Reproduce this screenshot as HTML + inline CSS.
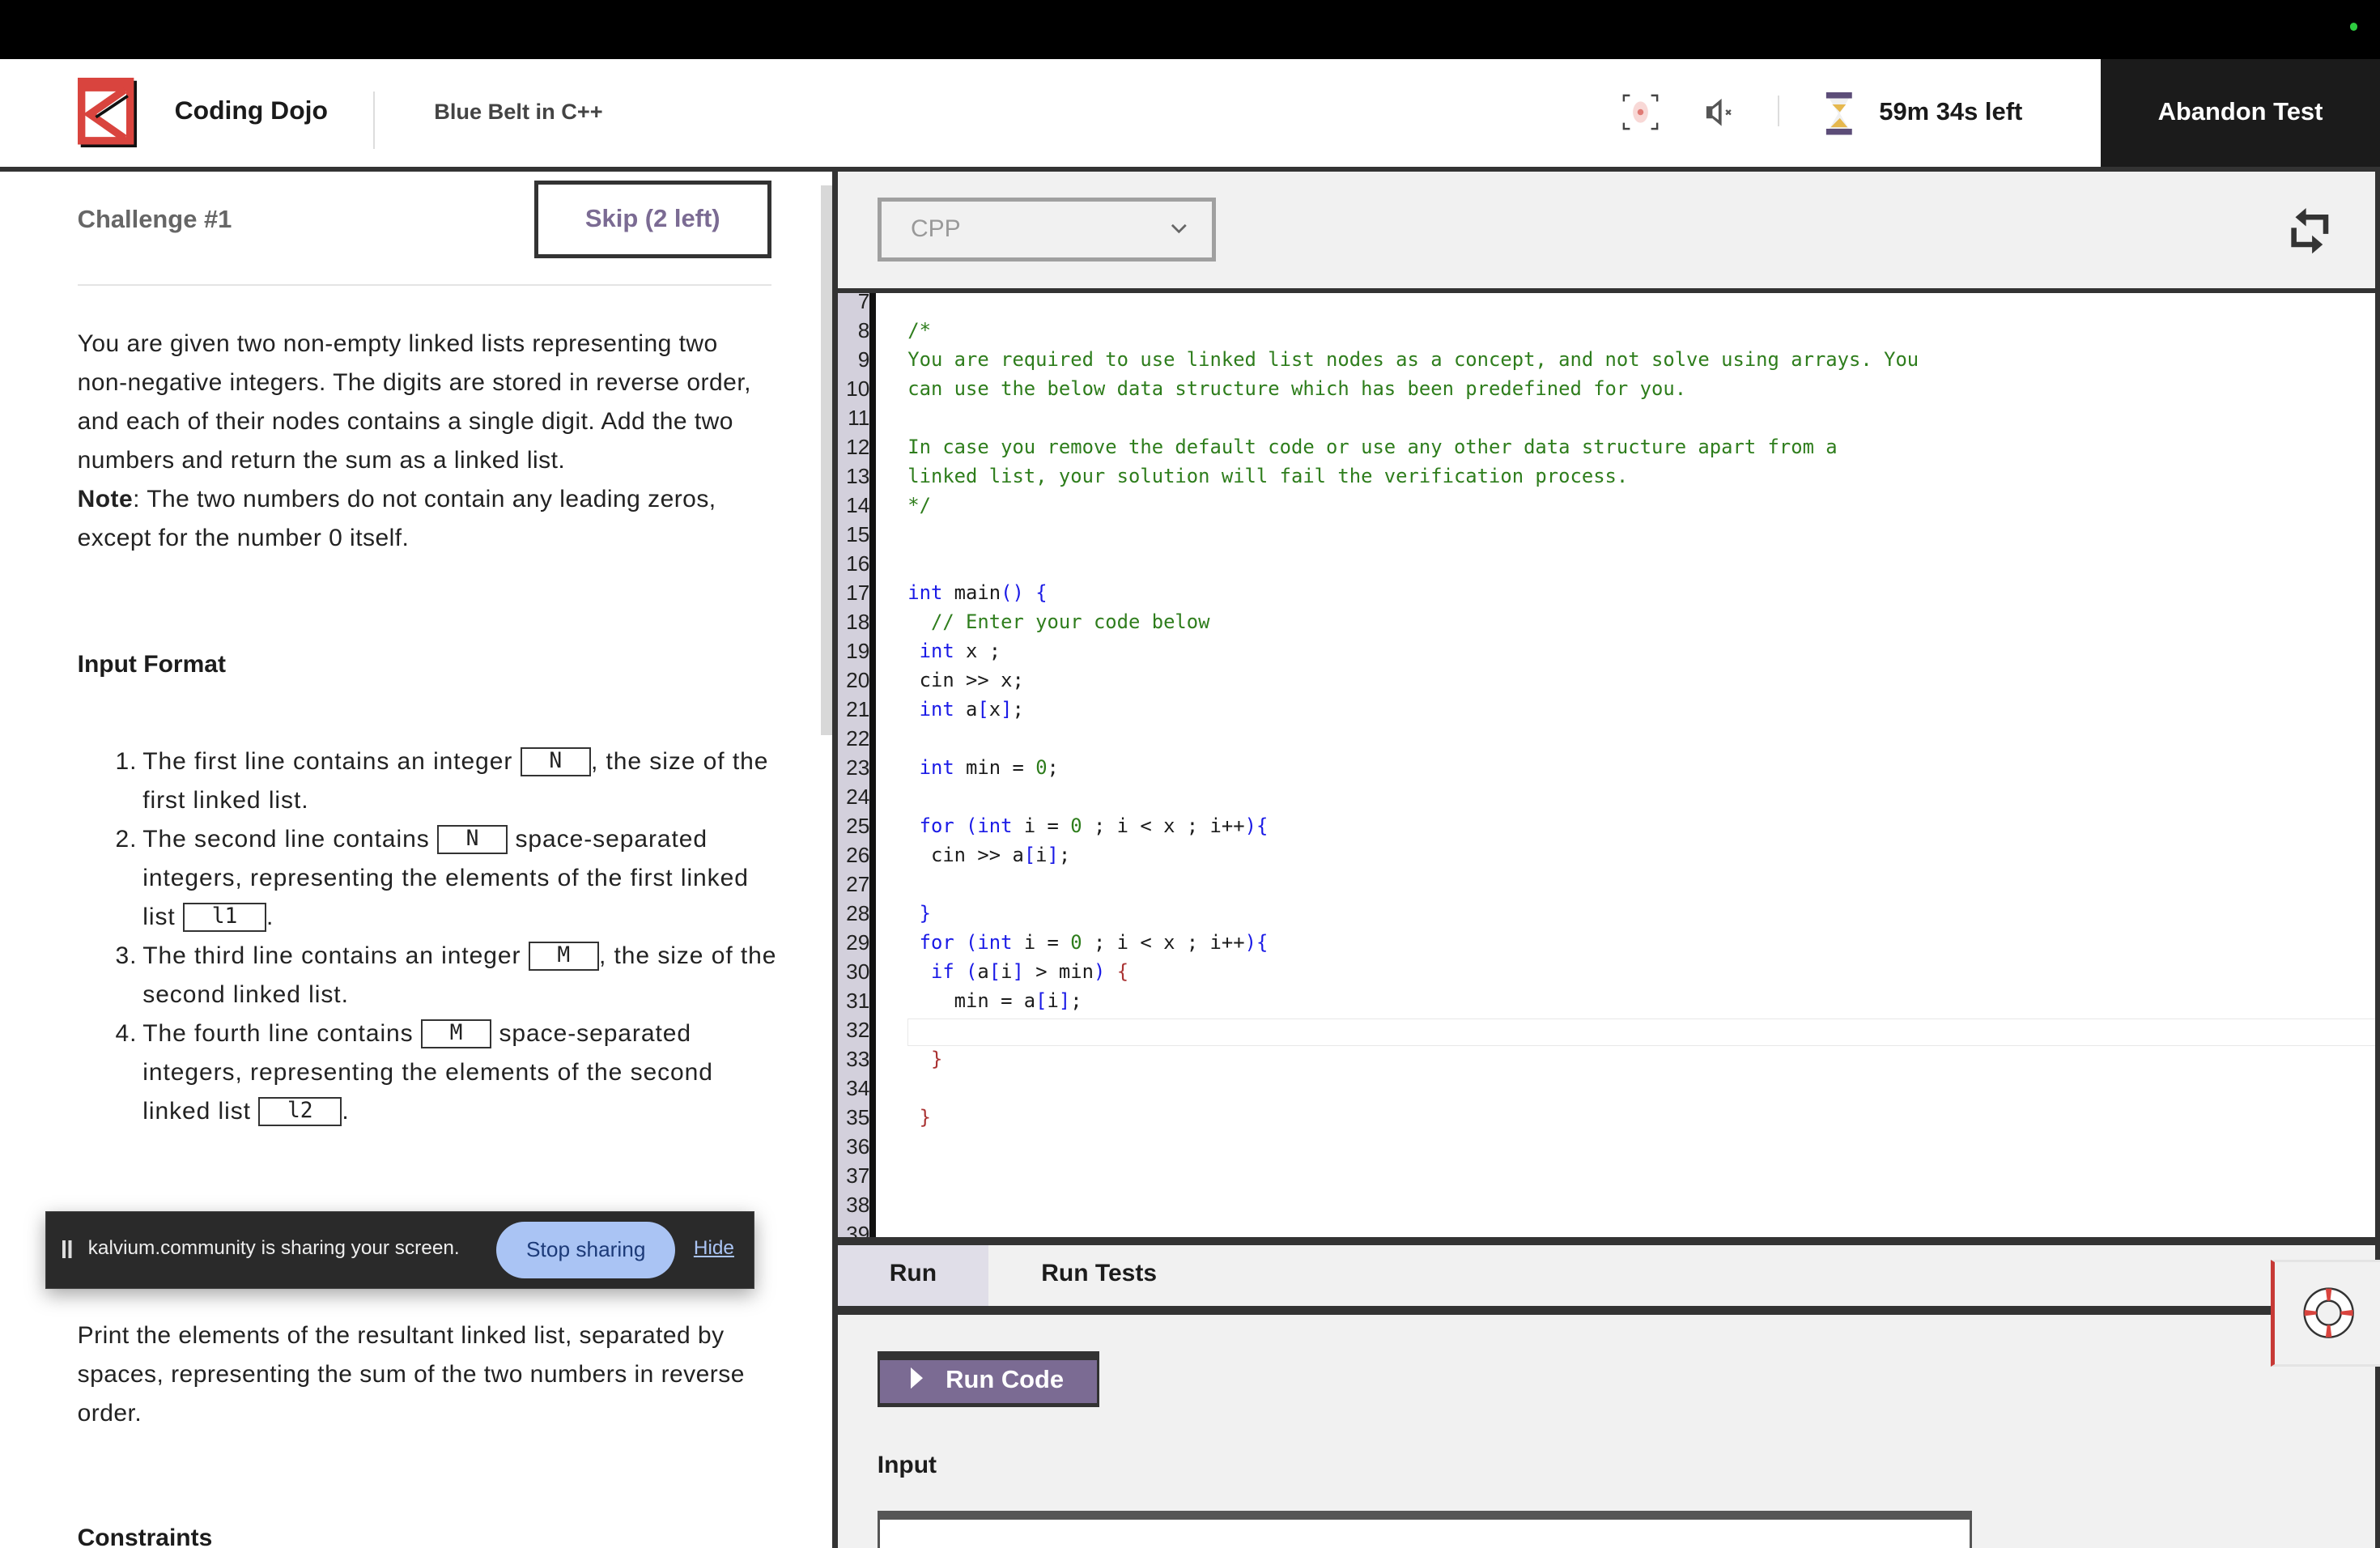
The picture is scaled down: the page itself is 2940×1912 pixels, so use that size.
<!DOCTYPE html>
<html><head><meta charset="utf-8"><style>
*{box-sizing:border-box;margin:0;padding:0}
html,body{width:2940px;height:1912px;overflow:hidden;background:#fff}
#w{zoom:1.875;width:1568px;height:1020px;position:relative;font-family:"Liberation Sans",sans-serif;color:#1c1c1c;overflow:hidden}
.a{position:absolute}
.code{font-family:"DejaVu Sans Mono","Liberation Mono",monospace;font-size:12.72px;white-space:pre;line-height:19.2px}
.g{color:#2e7d1c}.k{color:#1a1ae6}
.ln{position:absolute;left:552px;width:21px;text-align:right;font-family:"Liberation Sans Narrow","Liberation Sans",sans-serif;font-size:14px;color:#222;line-height:19.2px}
.p{font-size:16px;line-height:25.6px;color:#222;letter-spacing:0.25px}
.box{display:inline-block;border:1.5px solid #333;font-family:"DejaVu Sans Mono",monospace;font-size:14px;line-height:17px;padding:0 18px;vertical-align:1px;letter-spacing:0}
</style></head><body><div id="w">
<div class="a" style="left:0;top:0;width:1568px;height:39px;background:#000"></div>
<div class="a" style="left:1548px;top:15px;width:5px;height:5px;border-radius:50%;background:#2ecc40"></div>
<!-- header -->
<div class="a" style="left:0;top:110px;width:1568px;height:3px;background:#333"></div>
<svg class="a" style="left:51px;top:51px" width="39" height="46" viewBox="0 0 39 46"><rect x="2" y="2" width="37" height="44" fill="#111"/><rect x="0" y="0" width="37" height="44" fill="#d9443e"/><rect x="5" y="9" width="27" height="30" fill="#fff"/><path d="M31 8 L8 24 L31 40" stroke="#d9443e" stroke-width="5" fill="none"/><path d="M33 12 L12 26" stroke="#111" stroke-width="2"/></svg>
<div class="a" style="left:115px;top:63px;font-size:17px;font-weight:bold;color:#1a1a1a">Coding Dojo</div>
<div class="a" style="left:246px;top:60px;width:1px;height:38px;background:#ddd"></div>
<div class="a" style="left:286px;top:65px;font-size:14.5px;font-weight:bold;color:#444">Blue Belt in C++</div>
<svg class="a" style="left:1069px;top:62px" width="24" height="24" viewBox="0 0 24 24"><path d="M1 5V1H5M19 1H23V5M23 19V23H19M5 23H1V19" stroke="#444" stroke-width="1.3" fill="none"/><ellipse cx="12" cy="12" rx="5" ry="7" fill="#f8d8d6"/><circle cx="12" cy="12" r="2" fill="#e07a74"/></svg>
<svg class="a" style="left:1123px;top:64px" width="20" height="20" viewBox="0 0 20 20"><path d="M1 6H5L11 1V19L5 14H1Z" fill="#555"/><path d="M5 8L9 5V15L5 12Z" fill="#fff"/><path d="M14 8.5L17 11.5M17 8.5L14 11.5" stroke="#555" stroke-width="1.3"/></svg>
<div class="a" style="left:1171px;top:63px;width:1.5px;height:20px;background:#ddd"></div>
<svg class="a" style="left:1202px;top:61px" width="20" height="28" viewBox="0 0 20 28"><rect x="1" y="0" width="17" height="4" fill="#5c4d78"/><rect x="1" y="24" width="17" height="4" fill="#5c4d78"/><path d="M3 4H16L10 14L16 24H3L9 14Z" fill="#f0f0f0"/><path d="M5 8H14L10 13Z M4 23H15L10 17Z" fill="#e6b84e"/></svg>
<div class="a" style="left:1238px;top:64px;font-size:16.5px;font-weight:bold;color:#1a1a1a">59m 34s left</div>
<div class="a" style="left:1384px;top:39px;width:184px;height:71px;background:#1b1b1b"></div>
<div class="a" style="left:1384px;top:64px;width:184px;text-align:center;font-size:16.5px;font-weight:bold;color:#fff">Abandon Test</div>
<!-- left panel -->
<div class="a" style="left:51px;top:135px;font-size:16.5px;font-weight:bold;color:#666">Challenge #1</div>
<div class="a" style="left:352px;top:119px;width:156px;height:51px;border:3px solid #333;text-align:center;line-height:45px;font-size:16.5px;font-weight:bold;color:#7b6b93">Skip (2 left)</div>
<div class="a" style="left:51px;top:187px;width:457px;height:1.5px;background:#e4e4e4"></div>
<div class="a p" style="left:51px;top:214px;width:456px">You are given two non-empty linked lists representing two non-negative integers. The digits are stored in reverse order, and each of their nodes contains a single digit. Add the two numbers and return the sum as a linked list.<br><b>Note</b>: The two numbers do not contain any leading zeros, except for the number 0 itself.</div>
<div class="a" style="left:51px;top:429px;font-size:16px;font-weight:bold">Input Format</div>
<div class="a p" style="left:76px;top:489px;width:436px;letter-spacing:0.5px">
<div style="position:relative;padding-left:18px"><span style="position:absolute;left:0">1.</span>The first line contains an integer <span class="box">N</span>, the size of the first linked list.</div>
<div style="position:relative;padding-left:18px"><span style="position:absolute;left:0">2.</span>The second line contains <span class="box">N</span> space-separated integers, representing the elements of the first linked list <span class="box">l1</span>.</div>
<div style="position:relative;padding-left:18px"><span style="position:absolute;left:0">3.</span>The third line contains an integer <span class="box">M</span>, the size of the second linked list.</div>
<div style="position:relative;padding-left:18px"><span style="position:absolute;left:0">4.</span>The fourth line contains <span class="box">M</span> space-separated integers, representing the elements of the second linked list <span class="box">l2</span>.</div>
</div>
<div class="a p" style="left:51px;top:867px;width:460px">Print the elements of the resultant linked list, separated by spaces, representing the sum of the two numbers in reverse order.</div>
<div class="a" style="left:51px;top:1004px;font-size:16px;font-weight:bold">Constraints</div>
<!-- share bar -->
<div class="a" style="left:30px;top:798px;width:467px;height:51px;background:#2a2a2a;border:1px solid #444;box-shadow:0 4px 12px rgba(0,0,0,.35)"></div>
<div class="a" style="left:41px;top:817px;width:2px;height:12px;background:#ddd;box-shadow:4px 0 0 #ddd"></div>
<div class="a" style="left:58px;top:815px;font-size:13px;color:#eee">kalvium.community is sharing your screen.</div>
<div class="a" style="left:327px;top:805px;width:118px;height:37px;border-radius:19px;background:#aac4f4;color:#1c3a78;font-size:14px;text-align:center;line-height:37px">Stop sharing</div>
<div class="a" style="left:457px;top:815px;font-size:13px;color:#aac4f4;text-decoration:underline">Hide</div>
<!-- scrollbar / divider -->
<div class="a" style="left:541px;top:122px;width:7px;height:362px;background:#d8d8d8"></div>
<div class="a" style="left:548px;top:110px;width:4px;height:910px;background:#333"></div>
<!-- right toolbar -->
<div class="a" style="left:552px;top:113px;width:1013px;height:77px;background:#f1f1f1"></div>
<div class="a" style="left:1565px;top:110px;width:3px;height:910px;background:#333"></div>
<div class="a" style="left:552px;top:190px;width:1016px;height:3px;background:#333"></div>
<div class="a" style="left:578px;top:130px;width:223px;height:42px;border:3px solid #a0a0a0;background:#f1f1f1"></div>
<div class="a" style="left:600px;top:142px;font-size:16px;color:#999">CPP</div>
<svg class="a" style="left:771px;top:147px" width="11" height="8"><path d="M1 1L5.5 5.5L10 1" stroke="#666" stroke-width="1.5" fill="none"/></svg>
<svg class="a" style="left:1508px;top:137px" width="27" height="30" viewBox="0 0 27 30"><path d="M24 17V6H9" stroke="#333" stroke-width="3.5" fill="none"/><path d="M11 0L4 6L11 12Z" fill="#333"/><path d="M3 13V24H17" stroke="#333" stroke-width="3.5" fill="none"/><path d="M15 18L22 24L15 30Z" fill="#333"/></svg>
<!-- editor -->
<div class="a" style="left:552px;top:193px;width:21px;height:622px;background:#d3d0dc"></div>
<div class="a" style="left:573px;top:193px;width:4px;height:622px;background:#111"></div>
<div class="a" style="left:577px;top:193px;width:988px;height:622px;background:#fff;overflow:hidden">
<div class="a" style="left:21px;top:478px;width:970px;height:18px;border:1px solid #e8e8e8"></div>
</div>
<div class="ln" style="top:189px">7<br>8<br>9<br>10<br>11<br>12<br>13<br>14<br>15<br>16<br>17<br>18<br>19<br>20<br>21<br>22<br>23<br>24<br>25<br>26<br>27<br>28<br>29<br>30<br>31<br>32<br>33<br>34<br>35<br>36<br>37<br>38<br>39</div>
<div class="a code" style="left:598px;top:208px"><span class="g">/*
You are required to use linked list nodes as a concept, and not solve using arrays. You
can use the below data structure which has been predefined for you.

In case you remove the default code or use any other data structure apart from a
linked list, your solution will fail the verification process.
*/</span>


<span class="k">int</span> main<span class="k">()</span> <span class="k">{</span>
  <span class="g">// Enter your code below</span>
 <span class="k">int</span> x ;
 cin &gt;&gt; x;
 <span class="k">int</span> a<span class="k">[</span>x<span class="k">]</span>;

 <span class="k">int</span> min = <span class="g">0</span>;

 <span class="k">for</span> <span class="k">(int</span> i = <span class="g">0</span> ; i &lt; x ; i++<span class="k">){</span>
  cin &gt;&gt; a<span class="k">[</span>i<span class="k">]</span>;

 <span class="k">}</span>
 <span class="k">for</span> <span class="k">(int</span> i = <span class="g">0</span> ; i &lt; x ; i++<span class="k">){</span>
  <span class="k">if</span> <span class="k">(</span>a<span class="k">[</span>i<span class="k">]</span> &gt; min<span class="k">)</span> <span style="color:#a33">{</span>
    min = a<span class="k">[</span>i<span class="k">]</span>;

  <span style="color:#a33">}</span>

 <span style="color:#a33">}</span></div>
<div class="a" style="left:552px;top:815px;width:1013px;height:5px;background:#333"></div>
<!-- bottom panel -->
<div class="a" style="left:552px;top:820px;width:1013px;height:200px;background:#f1f1f1"></div>
<div class="a" style="left:552px;top:820px;width:99px;height:40px;background:#e0dee8"></div>
<div class="a" style="left:586px;top:830px;font-size:16px;font-weight:bold">Run</div>
<div class="a" style="left:686px;top:830px;font-size:16px;font-weight:bold">Run Tests</div>
<div class="a" style="left:552px;top:860px;width:944px;height:6px;background:#333"></div>
<div class="a" style="left:578px;top:890px;width:146px;height:37px;background:#7b6b93;border:3px solid #333;border-left-width:2px;border-right-width:2px;border-top-width:6px"></div>
<svg class="a" style="left:600px;top:901px" width="8" height="14"><path d="M0 0L8 7L0 14Z" fill="#fff"/></svg>
<div class="a" style="left:623px;top:899px;font-size:16.5px;font-weight:bold;color:#fff">Run Code</div>
<div class="a" style="left:578px;top:956px;font-size:16px;font-weight:bold">Input</div>
<div class="a" style="left:578px;top:995px;width:721px;height:30px;background:#fff;border:2px solid #555;border-top-width:6px"></div>
<!-- lifebuoy -->
<div class="a" style="left:1496px;top:830px;width:72px;height:70px;background:#f1f1f1;border-left:3px solid #c73a36;border-top:2px solid #e4e4e4;border-bottom:2px solid #e4e4e4"></div>
<svg class="a" style="left:1515px;top:846px" width="38" height="38" viewBox="0 0 38 38"><circle cx="19" cy="19" r="16" fill="#fff" stroke="#333" stroke-width="1.3"/><circle cx="19" cy="19" r="8" fill="#f1f1f1" stroke="#333" stroke-width="1.3"/><path d="M17 3H21L20 11H18Z M17 35H21L20 27H18Z M3 17V21L11 20V18Z M35 17V21L27 20V18Z" fill="#d9443e"/></svg>
</div></body></html>
